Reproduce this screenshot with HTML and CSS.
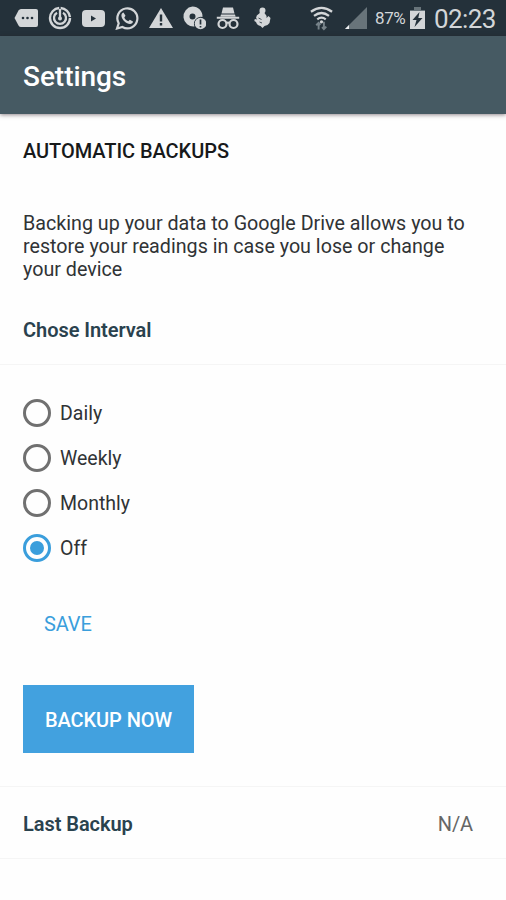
FILE: index.html
```html
<!DOCTYPE html>
<html lang="en">
<head>
<meta charset="utf-8">
<title>Settings</title>
<link rel="stylesheet" href="styles.css">
</head>
<body>
<div class="status">
  <div class="notifications">
    <svg viewBox="0 0 24 24"><path fill="currentColor" d="M7 3h15q2 0 2 2v14q0 2-2 2H7q-1.500 0-2.500-1.500L.5 12l4-7.500Q5.500 3 7 3z"/><g fill="#24313a"><circle cx="9" cy="12" r="1.300"/><circle cx="13.500" cy="12" r="1.300"/><circle cx="18" cy="12" r="1.300"/></g></svg>
    <svg viewBox="0 0 24 24" fill="none" stroke="currentColor"><circle cx="12" cy="12" r="10" stroke-width="2.400" stroke-dasharray="46 1.500 14 1.330"/><path stroke-width="2.300" d="M9 6.700a6 6 0 1 0 6 0M12 3v9"/><circle cx="12" cy="12.500" r="2" fill="currentColor" stroke="none"/></svg>
    <svg viewBox="0 0 24 24"><rect x="1" y="4" width="23" height="17" rx="4" fill="currentColor"/><path fill="#24313a" d="M10 9.500v6l5-3z"/></svg>
    <svg viewBox="0 0 24 24"><path fill="none" stroke="currentColor" stroke-width="2.200" d="M2 22.500l1.700-5.200A10 10 0 1 1 7.400 21z"/><path fill="currentColor" d="M8.500 6.500c-1.500.5-2.500 2-2 4 1 4 4.500 7 8.500 7.500 1.500 0 3-1 3-2.500l-3.200-1.800-1.500 1.500c-2-.8-3.300-2.200-4-3.800l1.200-1.600z"/></svg>
    <svg viewBox="0 0 24 24"><path fill="currentColor" d="M12 2l12 20H0z"/><path fill="#24313a" d="M10.800 8.500h2.400v7h-2.400zM10.800 17h2.400v2.500h-2.400z"/></svg>
    <svg viewBox="0 0 24 24"><path fill="currentColor" fill-rule="evenodd" d="M10.500.5a10 10 0 1 0 2 20 7 7 0 0 1 8-9.500A10 10 0 0 0 10.500.500zm0 7a3 3 0 1 1 0 6 3 3 0 0 1 0-6z"/><circle cx="18.500" cy="17.500" r="5.800" fill="currentColor"/><path stroke="#24313a" stroke-width="1.700" d="M18.500 13.500v5M18.500 20v1.600"/></svg>
    <svg viewBox="0 0 24 24"><path fill="currentColor" d="M7 1.500h10l1.500 6h-13zM5 8.500h14l.6 2H4.400zM.8 10.800h22.400v2H.8z"/><g fill="none" stroke="currentColor" stroke-width="2.200"><circle cx="6.500" cy="18" r="4"/><circle cx="17.500" cy="18" r="4"/><path d="M10.500 17q1.500-1 3 0"/></g></svg>
    <svg viewBox="0 0 24 24"><path fill="currentColor" d="M12.500 1.500a3 3 0 0 1 3 3q0 1.500-1 2.500 2.500 2.500 2 5l2-2 2 2-1 5q-1.500 2.500-5 3l-2 2-2-2q-3.500-.5-4.500-4l-1.700-1 .5-2 2.500.5q-2-2-.5-4l3-2.500Q9.500 6 9.500 4.500a3 3 0 0 1 3-3z"/><path fill="none" stroke="#24313a" stroke-width=".8" d="M8.500 12l3 1.500M9.500 16l2.500 1"/></svg>
  </div>
  <div class="system">
    <svg class="wifi" viewBox="0 0 26 26"><g fill="none" stroke="currentColor" stroke-width="2.300"><path d="M2 6.500q11-8 22 0M5.200 10.800q7.800-6 15.600 0M8.600 14.500q4.400-3.600 8.800 0"/></g><circle cx="13" cy="17" r="1.700" fill="currentColor"/><path fill="none" stroke="#77838a" stroke-width="2" d="M10 25v-7M7.500 20.500L10 18l2 2M15.500 17v8M13.500 22.500l2 2 2.500-2.500"/></svg>
    <svg class="signal" viewBox="0 0 24 24"><path fill="#68747a" d="M23 1v22H1z"/><path fill="#eef0f1" d="M5 19v4H1z"/></svg>
    <span class="percent">87%</span>
    <svg class="battery" viewBox="0 0 15 24"><path fill="#68747a" d="M4 1h7v3h4v4H0V4h4z"/><path fill="currentColor" d="M0 5h15v18H0z"/><path fill="#24313a" d="M9.500 6L2.500 14h4l-2 7 8-9H8.300z"/></svg>
    <span class="clock">02:23</span>
  </div>
</div>
<header class="appbar"><h1>Settings</h1></header>
<main>
  <section class="intro">
    <h2>AUTOMATIC BACKUPS</h2>
    <p>Backing up your data to Google Drive allows you to<br>restore your readings in case you lose or change<br>your device</p>
    <h3 class="interval">Chose Interval</h3>
  </section>
  <section class="options">
    <label class="option"><span class="radio"></span><span class="name">Daily</span></label>
    <label class="option"><span class="radio"></span><span class="name">Weekly</span></label>
    <label class="option"><span class="radio"></span><span class="name">Monthly</span></label>
    <label class="option"><span class="radio checked"></span><span class="name">Off</span></label>
    <button class="save">SAVE</button>
    <button class="backup">BACKUP NOW</button>
  </section>
  <section class="last"><h3>Last Backup</h3><span class="value">N/A</span></section>
</main>
</body>
</html>
```

FILE: styles.css
```css
* { box-sizing: border-box; }
body { margin: 0; height: 900px; overflow: hidden; background: #fefefe; color: #303335; font-family: Roboto, sans-serif; font-size: 20px; }
h1, h2, h3, p { margin: 0; font-weight: 500; }
svg { display: block; flex: none; }
.status { height: 36px; background: #24313a; color: #d3d6d8; display: flex; justify-content: space-between; padding: 0 10px 0 14px; }
.notifications { display: flex; align-items: center; gap: 9.700px; }
.notifications svg { width: 24px; height: 24px; }
.system { display: flex; align-items: center; }
.wifi { width: 25px; height: 26px; margin-right: 10px; }
.signal { width: 24px; height: 24px; margin-right: 7px; }
.percent { font-size: 17px; width: 35px; white-space: nowrap; letter-spacing: -0.4px; }
.battery { width: 15px; height: 24px; margin-right: 9px; }
.clock { font-size: 26px; width: 62px; letter-spacing: -0.6px; padding-top: 2px; }
.appbar { height: 78px; padding: 0 23px; background: #465a63; color: #fff; display: flex; align-items: center; box-shadow: 0 1px 4px rgba(40, 20, 30, .5); }
h1 { font-size: 28px; line-height: 32px; padding-top: 3px; letter-spacing: -0.05px; }
.intro { height: 251px; padding: 25px 23px 0; border-bottom: 1px solid #f5f5f5; }
h2 { font-size: 20px; line-height: 24px; color: #17191a; letter-spacing: -0.05px; }
.intro p { margin-top: 49px; font-weight: 400; font-size: 19.700px; line-height: 23px; white-space: nowrap; }
h3 { font-size: 20px; line-height: 24px; color: #2a424e; font-weight: 600; letter-spacing: -0.05px; }
.interval { margin-top: 37px; }
.options { height: 422px; padding: 25px 23px 0; border-bottom: 1px solid #f5f5f5; }
.option { display: flex; align-items: center; height: 45px; gap: 9px; font-size: 19.500px; }
.name { padding-top: 2px; }
.radio { width: 28px; height: 28px; border: 3px solid #707070; border-radius: 50%; display: grid; place-items: center; flex: none; }
.checked { border-color: #3a9edc; }
.checked::after { content: ""; width: 14px; height: 14px; border-radius: 50%; background: #3a9edc; }
button { display: block; border: 0; font: 500 20px/24px Roboto, sans-serif; letter-spacing: -0.1px; }
.save { margin: 42px 0 0 21px; padding: 0; background: none; color: #3a9edc; font-weight: 400; }
.backup { margin-top: 49px; width: 171px; height: 68px; padding: 1px 0 0; background: #42a1df; color: #fff; }
.last { height: 72px; padding: 2px 33px 0 23px; display: flex; justify-content: space-between; align-items: center; border-bottom: 1px solid #f5f5f5; }
.value { color: #666; letter-spacing: -0.1px; }
```
